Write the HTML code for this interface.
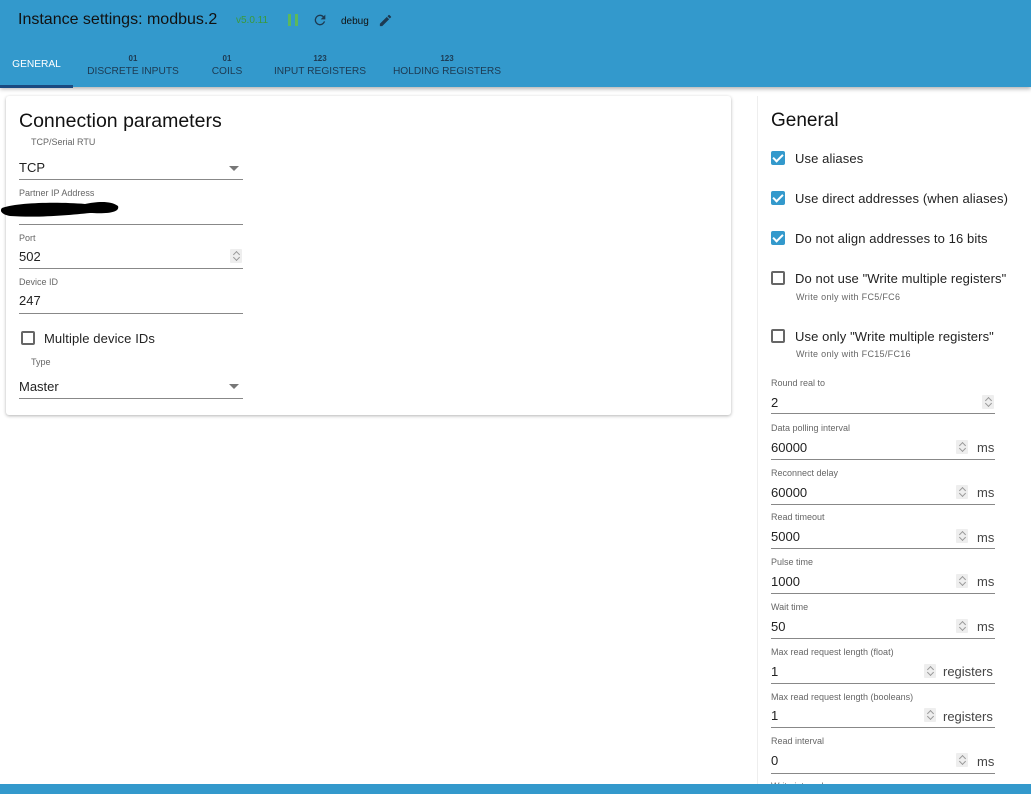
<!DOCTYPE html>
<html><head><meta charset="utf-8"><style>
*{margin:0;padding:0;box-sizing:border-box}
body{width:1031px;height:794px;overflow:hidden;background:#fff;font-family:"Liberation Sans",Arial,sans-serif;position:relative;color:#222}
.a{position:absolute;white-space:nowrap}
.hdr{position:absolute;left:0;top:0;width:1031px;height:87px;background:#3399cc;box-shadow:0 2px 4px rgba(0,0,0,.3)}
.tab{position:absolute;font-size:10.2px;color:#1d3a52;text-align:center;line-height:13px;white-space:nowrap}
.tab b{display:block;font-size:8px;font-weight:bold}
.lbl{position:absolute;font-size:9px;color:#666;line-height:12px;white-space:nowrap}
.val{position:absolute;font-size:13px;color:#222;line-height:16px;margin-top:1px}
.ln{position:absolute;height:1px;background:#888}
.sp{position:absolute;width:12px;height:14px;background:#eee;border-radius:1px}
.sp:before{content:"";position:absolute;left:3px;top:2px;width:4px;height:4px;border-left:1px solid #999;border-top:1px solid #999;transform:rotate(45deg);margin-left:1px;margin-top:1px}
.sp:after{content:"";position:absolute;left:3px;top:6px;width:4px;height:4px;border-right:1px solid #999;border-bottom:1px solid #999;transform:rotate(45deg);margin-left:1px}
.unit{position:absolute;font-size:13px;color:#444;line-height:16px}
.cb{position:absolute;width:14px;height:14px;border-radius:2px}
.cb.on{background:#3399cc}
.cb.on:after{content:"";position:absolute;left:4px;top:1px;width:4px;height:8px;border-right:2px solid #fff;border-bottom:2px solid #fff;transform:rotate(45deg)}
.cb.off{border:2px solid #666}
.ct{position:absolute;font-size:13px;color:#222;line-height:16px;letter-spacing:.1px;white-space:nowrap;margin-top:1px}
.sub{position:absolute;font-size:9px;color:#666;line-height:12px;letter-spacing:.3px;white-space:nowrap}
.arr{position:absolute;width:0;height:0;border-left:5px solid transparent;border-right:5px solid transparent;border-top:5px solid #777}
</style></head><body>
<div class="hdr"></div>
<div class="a" style="left:18px;top:10px;font-size:16px;color:#111;line-height:20px">Instance settings: modbus.2</div>
<div class="a" style="left:236px;top:15px;font-size:10px;color:#3a9a3a;line-height:12px">v5.0.11</div>
<div class="a" style="left:288px;top:14px;width:3px;height:12px;background:#5cb85c"></div>
<div class="a" style="left:295px;top:14px;width:3px;height:12px;background:#5cb85c"></div>
<svg class="a" style="left:312px;top:12px" width="16" height="16" viewBox="0 0 24 24"><path fill="#1d3a52" d="M17.65 6.35A7.96 7.96 0 0 0 12 4a8 8 0 1 0 7.73 10h-2.08A6 6 0 1 1 12 6c1.66 0 3.140.69 4.22 1.78L13 11h7V4l-2.35 2.35z"/></svg>
<div class="a" style="left:341px;top:16px;font-size:10px;color:#111;line-height:12px">debug</div>
<svg class="a" style="left:378px;top:13px" width="15" height="15" viewBox="0 0 24 24"><path fill="#1d3a52" d="M3 17.25V21h3.75L17.81 9.94l-3.75-3.75L3 17.25zM20.71 7.04a1 1 0 0 0 0-1.410l-2.34-2.34a1 1 0 0 0-1.41 0l-1.83 1.83 3.75 3.75 1.83-1.83z"/></svg>
<div class="tab" style="left:0;width:73px;top:58px;color:#fff">GENERAL</div>
<div class="a" style="left:0;top:85px;width:73px;height:3px;background:#1a4a80"></div>
<div class="tab" style="left:83px;width:100px;top:52px"><b>01</b>DISCRETE INPUTS</div>
<div class="tab" style="left:200px;width:54px;top:52px"><b>01</b>COILS</div>
<div class="tab" style="left:270px;width:100px;top:52px"><b>123</b>INPUT REGISTERS</div>
<div class="tab" style="left:387px;width:120px;top:52px"><b>123</b>HOLDING REGISTERS</div>

<div class="a" style="left:6px;top:96px;width:725px;height:319px;background:#fff;box-shadow:0 1px 3px rgba(0,0,0,.3);border-radius:3px"></div>
<div class="a" style="left:19px;top:110px;font-size:19.5px;color:#111;line-height:22px">Connection parameters</div>
<div class="lbl" style="left:31px;top:136px">TCP/Serial RTU</div>
<div class="val" style="left:19px;top:159px">TCP</div>
<div class="arr" style="left:229px;top:166px"></div>
<div class="ln" style="left:19px;top:179px;width:224px"></div>
<div class="lbl" style="left:19px;top:187px">Partner IP Address</div>
<svg class="a" style="left:0;top:198px" width="122" height="22"><path d="M2 10 C20 4 60 4 85 6 C95 4 110 2 118 8 C120 14 110 16 90 15 C70 17 40 20 10 18 C0 16 0 12 2 10z" fill="#000"/></svg>
<div class="ln" style="left:19px;top:224px;width:224px"></div>
<div class="lbl" style="left:19px;top:232px">Port</div>
<div class="val" style="left:19px;top:248px">502</div>
<div class="sp" style="left:230px;top:249px"></div>
<div class="ln" style="left:19px;top:268px;width:224px"></div>
<div class="lbl" style="left:19px;top:276px">Device ID</div>
<div class="val" style="left:19px;top:292px">247</div>
<div class="ln" style="left:19px;top:313px;width:224px"></div>
<div class="cb off" style="left:21px;top:331px"></div>
<div class="ct" style="left:44px;top:330px">Multiple device IDs</div>
<div class="lbl" style="left:31px;top:356px">Type</div>
<div class="val" style="left:19px;top:378px">Master</div>
<div class="arr" style="left:229px;top:384px"></div>
<div class="ln" style="left:19px;top:398px;width:224px"></div>

<div class="a" style="left:757px;top:96px;width:1px;height:688px;background:#eee"></div>
<div class="a" style="left:771px;top:110px;font-size:19px;color:#111;line-height:22px">General</div>
<div class="cb on" style="left:771px;top:151px"></div><div class="ct" style="left:795px;top:150px">Use aliases</div>
<div class="cb on" style="left:771px;top:191px"></div><div class="ct" style="left:795px;top:190px">Use direct addresses (when aliases)</div>
<div class="cb on" style="left:771px;top:231px"></div><div class="ct" style="left:795px;top:230px">Do not align addresses to 16 bits</div>
<div class="cb off" style="left:771px;top:271px"></div><div class="ct" style="left:795px;top:270px">Do not use "Write multiple registers"</div>
<div class="sub" style="left:796px;top:291px">Write only with FC5/FC6</div>
<div class="cb off" style="left:771px;top:329px"></div><div class="ct" style="left:795px;top:328px">Use only "Write multiple registers"</div>
<div class="sub" style="left:796px;top:348px">Write only with FC15/FC16</div>

<div class="lbl" style="left:771px;top:377px">Round real to</div>
<div class="val" style="left:771px;top:394px">2</div>
<div class="sp" style="left:982px;top:395px"></div>
<div class="ln" style="left:771px;top:413px;width:224px"></div>

<div class="lbl" style="left:771px;top:422px">Data polling interval</div><div class="val" style="left:771px;top:439px">60000</div><div class="sp" style="left:956px;top:440px"></div><div class="unit" style="left:977px;top:440px">ms</div><div class="ln" style="left:771px;top:459px;width:224px"></div>
<div class="lbl" style="left:771px;top:467px">Reconnect delay</div><div class="val" style="left:771px;top:484px">60000</div><div class="sp" style="left:956px;top:485px"></div><div class="unit" style="left:977px;top:485px">ms</div><div class="ln" style="left:771px;top:504px;width:224px"></div>
<div class="lbl" style="left:771px;top:511px">Read timeout</div><div class="val" style="left:771px;top:528px">5000</div><div class="sp" style="left:956px;top:529px"></div><div class="unit" style="left:977px;top:530px">ms</div><div class="ln" style="left:771px;top:548px;width:224px"></div>
<div class="lbl" style="left:771px;top:556px">Pulse time</div><div class="val" style="left:771px;top:573px">1000</div><div class="sp" style="left:956px;top:574px"></div><div class="unit" style="left:977px;top:574px">ms</div><div class="ln" style="left:771px;top:593px;width:224px"></div>
<div class="lbl" style="left:771px;top:601px">Wait time</div><div class="val" style="left:771px;top:618px">50</div><div class="sp" style="left:956px;top:619px"></div><div class="unit" style="left:977px;top:619px">ms</div><div class="ln" style="left:771px;top:638px;width:224px"></div>
<div class="lbl" style="left:771px;top:646px">Max read request length (float)</div><div class="val" style="left:771px;top:663px">1</div><div class="sp" style="left:924px;top:664px"></div><div class="unit" style="left:943px;top:664px">registers</div><div class="ln" style="left:771px;top:683px;width:224px"></div>
<div class="lbl" style="left:771px;top:691px">Max read request length (booleans)</div><div class="val" style="left:771px;top:707px">1</div><div class="sp" style="left:924px;top:708px"></div><div class="unit" style="left:943px;top:709px">registers</div><div class="ln" style="left:771px;top:727px;width:224px"></div>
<div class="lbl" style="left:771px;top:735px">Read interval</div><div class="val" style="left:771px;top:752px">0</div><div class="sp" style="left:956px;top:753px"></div><div class="unit" style="left:977px;top:754px">ms</div><div class="ln" style="left:771px;top:773px;width:224px"></div>
<div class="lbl" style="left:771px;top:780px">Write interval</div>
<div class="a" style="left:0;top:784px;width:1031px;height:10px;background:#3399cc"></div>
</body></html>
